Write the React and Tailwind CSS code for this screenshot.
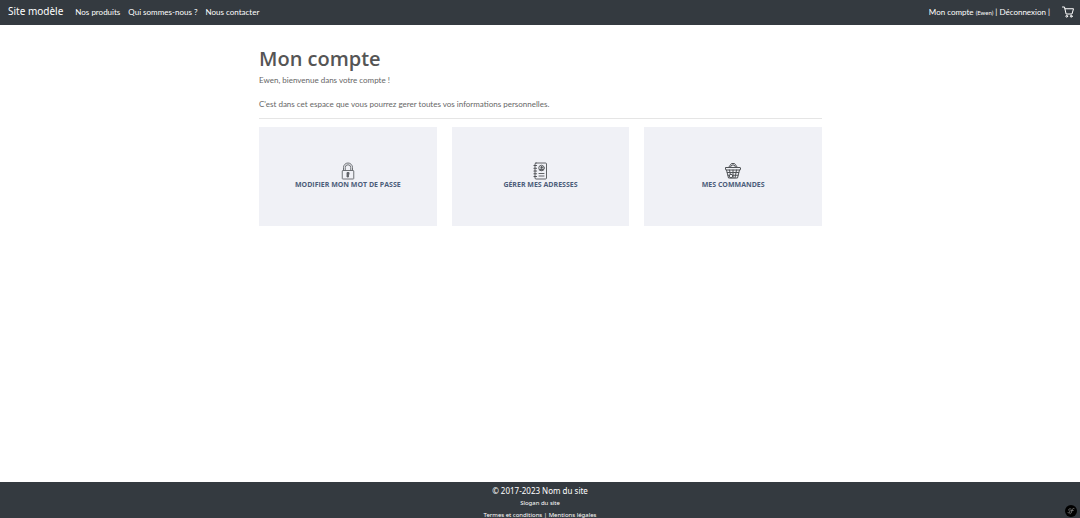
import React from "react";

function CartIcon() {
  return (
    <svg viewBox="0 0 24 24" className="size-3" fill="none" stroke="currentColor" strokeWidth="2" strokeLinecap="round" strokeLinejoin="round" aria-hidden="true">
      <path d="M1 2h4l3.2 14H20l3-10.500H6" />
      <circle cx="9.500" cy="20.500" r="1.800" />
      <circle cx="18.500" cy="20.500" r="1.800" />
    </svg>
  );
}

function LockIcon() {
  return (
    <svg viewBox="0 0 36 36" className="size-[18px]" fill="none" stroke="#606368" strokeWidth="1.8" strokeLinejoin="round" aria-hidden="true">
      <path d="M9 17V11a9 9 0 0 1 18 0v6M12.500 17V11a5.500 5.500 0 0 1 11 0v6" />
      <rect x="6.500" y="17" width="23" height="17" rx="1" />
      <path d="M16 21h4v4h-1v5h-3v-5z" fill="#606368" />
    </svg>
  );
}

function AddressBookIcon() {
  return (
    <svg viewBox="0 0 36 36" className="size-[18px]" fill="none" stroke="#505357" strokeWidth="1.8" strokeLinejoin="round" strokeLinecap="round" aria-hidden="true">
      <rect x="8" y="2" width="23" height="32" rx="2" />
      <path d="M6 7h5M6 12.500h5M6 18h5M6 23.500h5M6 29h5" strokeWidth="2.400" />
      <circle cx="21" cy="12" r="5.500" />
      <circle cx="21" cy="10.500" r="1.500" fill="#505357" />
      <path d="M17.500 15.500c1-3 6-3 7 0z" fill="#505357" />
      <path d="M16 23h10M16 28h10" />
    </svg>
  );
}

function BasketIcon() {
  return (
    <svg viewBox="0 0 36 36" className="size-[18px]" fill="none" stroke="#505357" strokeWidth="2" strokeLinejoin="round" strokeLinecap="round" aria-hidden="true">
      <path d="M9 11l6-8h6l6 8M12 11l4-5h4l4 5" />
      <rect x="3" y="11" width="30" height="5" rx="1" />
      <path d="M5 16l4 16h18l4-16M11 16l3 16M18 16v16M25 16l-3 16M6.500 21h23M8 26.500h20" />
      <circle cx="14" cy="28" r="3.500" fill="#f0f1f6" />
    </svg>
  );
}

const navLinks = ["Nos produits", "Qui sommes-nous ?", "Nous contacter"];

const cards = [
  { label: "Modifier mon mot de passe", Icon: LockIcon },
  { label: "Gérer mes adresses", Icon: AddressBookIcon },
  { label: "Mes commandes", Icon: BasketIcon },
];

export default function App() {
  return (
    <div className="flex min-h-screen flex-col bg-white font-['Lato','Open_Sans',sans-serif] text-[8px] text-[#666]">
      <header className="flex h-[25px] items-center justify-between bg-[#343a40] pr-1.5 pb-0.5 pl-2 text-white">
        <nav className="flex items-center gap-2">
          <a href="#" className="mr-1 font-['Noto_Sans',sans-serif] text-[10px]">Site modèle</a>
          {navLinks.map((label) => (
            <a key={label} href="#">{label}</a>
          ))}
        </nav>
        <div className="flex items-center gap-3">
          <p>
            <a href="#">Mon compte <span className="text-[6px]">(Ewen)</span></a>
            {" | "}
            <a href="#">Déconnexion</a>
            {" |"}
          </p>
          <a href="#" aria-label="Panier"><CartIcon /></a>
        </div>
      </header>

      <main className="mx-auto w-[564px] max-w-full grow pt-5 pl-px">
        <h1 className="font-['Open_Sans',sans-serif] text-[20px] leading-7 font-semibold text-[#555]">Mon compte</h1>
        <p className="mt-px leading-3">Ewen, bienvenue dans votre compte !</p>
        <p className="mt-3 leading-3">C'est dans cet espace que vous pourrez gerer toutes vos informations personnelles.</p>
        <hr className="my-2 border-[#e5e5e5]" />
        <div className="grid grid-cols-3 gap-[15px]">
          {cards.map(({ label, Icon }) => (
            <a key={label} href="#" className="flex h-[99px] flex-col items-center justify-center bg-[#f0f1f6] pb-0.5 font-['Open_Sans',sans-serif] text-[7px] leading-[10px] font-bold text-[#4c5d7a] uppercase">
              <Icon />
              {label}
            </a>
          ))}
        </div>
      </main>

      <footer className="h-9 overflow-hidden bg-[#343a40] pt-[3px] text-center font-['Noto_Sans',sans-serif] text-[6px] leading-3 text-white">
        <p className="text-[8px] leading-3">© 2017-2023 Nom du site</p>
        <p>Slogan du site</p>
        <p><a href="#">Termes et conditions</a> | <a href="#">Mentions légales</a></p>
      </footer>

      <button type="button" aria-label="Symfony" className="fixed right-[3px] bottom-px flex size-3 items-center justify-center rounded-full bg-black text-[#777]">
        <svg viewBox="0 0 12 12" className="size-3" fill="none" stroke="currentColor" strokeWidth="0.9" strokeLinecap="round" aria-hidden="true">
          <path d="M6 4c-2-.8-3 .8-2 1.600s1.600 1.700.3 2.200c-.8.3-1.400 0-1.300-.4M9 3.500c-1.300-.6-1.900.8-2.200 2.500S6 9 5 8.800M5.800 5.500h2.400" />
        </svg>
      </button>
    </div>
  );
}
